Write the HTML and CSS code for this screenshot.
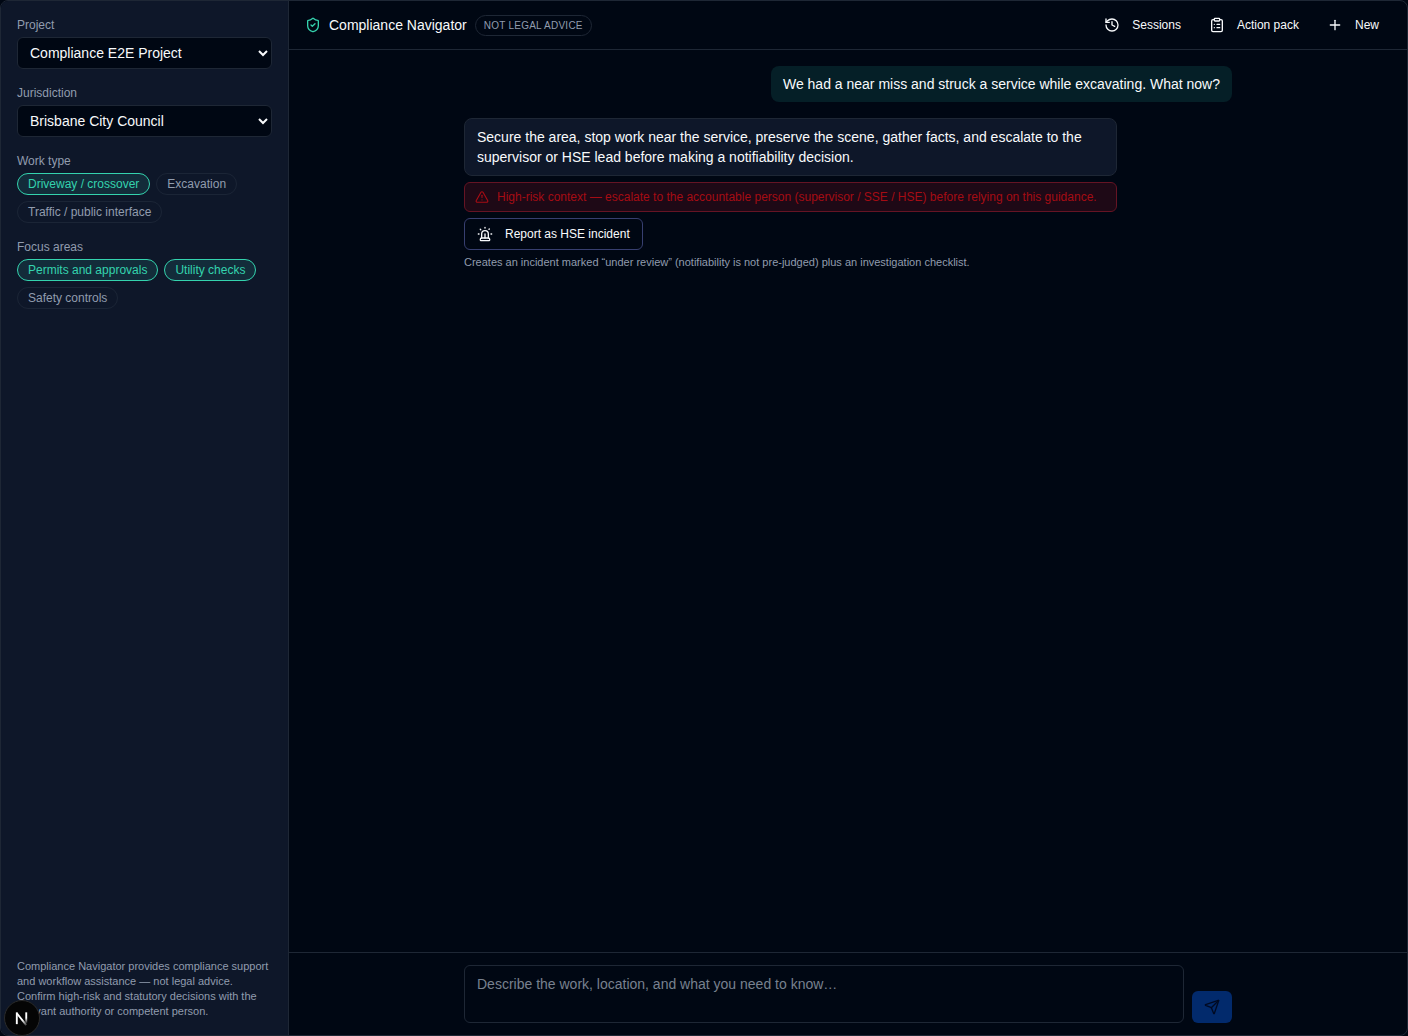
FILE: index.html
```html
<!DOCTYPE html>
<html lang="en">
<head>
    <meta charset="UTF-8">
    <meta name="viewport" content="width=device-width, initial-scale=1.0">
    <title>Compliance Navigator</title>
    <link rel="stylesheet" href="styles.css">
</head>
<body>
<div class="shell">
    <aside class="sidebar">
        <div class="field">
            <label class="label" for="project">Project</label>
            <select class="select" id="project">
                <option>Compliance E2E Project</option>
            </select>
        </div>
        <div class="field">
            <label class="label" for="jurisdiction">Jurisdiction</label>
            <select class="select" id="jurisdiction">
                <option>Brisbane City Council</option>
            </select>
        </div>
        <div class="field">
            <span class="label" id="work-type">Work type</span>
            <div class="chips" role="group" aria-labelledby="work-type">
                <button class="chip active" type="button" aria-pressed="true">Driveway / crossover</button>
                <button class="chip" type="button" aria-pressed="false">Excavation</button>
                <button class="chip" type="button" aria-pressed="false">Traffic / public interface</button>
            </div>
        </div>
        <div class="field">
            <span class="label" id="focus-areas">Focus areas</span>
            <div class="chips" role="group" aria-labelledby="focus-areas">
                <button class="chip active" type="button" aria-pressed="true">Permits and approvals</button>
                <button class="chip active" type="button" aria-pressed="true">Utility checks</button>
                <button class="chip" type="button" aria-pressed="false">Safety controls</button>
            </div>
        </div>
        <p class="disclaimer">Compliance Navigator provides compliance support and workflow assistance — not legal advice. Confirm high-risk and statutory decisions with the relevant authority or competent person.</p>
    </aside>

    <main class="main">
        <header class="header">
            <svg class="icon brand" viewBox="0 0 24 24"><path d="M20 13c0 5-3.5 7.5-7.66 8.95a1 1 0 0 1-.67-.01C7.5 20.5 4 18 4 13V6a1 1 0 0 1 1-1c2 0 4.5-1.2 6.24-2.72a1.17 1.17 0 0 1 1.52 0C14.51 3.81 17 5 19 5a1 1 0 0 1 1 1z"/><path d="m9 12 2 2 4-4"/></svg>
            <h1 class="title">Compliance Navigator</h1>
            <span class="badge">Not legal advice</span>
            <div class="actions">
                <button class="btn" type="button">
                    <svg class="icon" viewBox="0 0 24 24"><path d="M3 12a9 9 0 1 0 9-9 9.75 9.75 0 0 0-6.74 2.74L3 8"/><path d="M3 3v5h5"/><path d="M12 7v5l4 2"/></svg>
                    Sessions
                </button>
                <button class="btn" type="button">
                    <svg class="icon" viewBox="0 0 24 24"><rect width="8" height="4" x="8" y="2" rx="1" ry="1"/><path d="M16 4h2a2 2 0 0 1 2 2v14a2 2 0 0 1-2 2H6a2 2 0 0 1-2-2V6a2 2 0 0 1 2-2h2"/><path d="M12 11h4"/><path d="M12 16h4"/><path d="M8 11h.01"/><path d="M8 16h.01"/></svg>
                    Action pack
                </button>
                <button class="btn" type="button">
                    <svg class="icon" viewBox="0 0 24 24"><path d="M5 12h14"/><path d="M12 5v14"/></svg>
                    New
                </button>
            </div>
        </header>

        <section class="chat">
            <div class="thread">
                <p class="bubble user">We had a near miss and struck a service while excavating. What now?</p>
                <div class="reply">
                    <p class="bubble assistant">Secure the area, stop work near the service, preserve the scene, gather facts, and escalate to the supervisor or HSE lead before making a notifiability decision.</p>
                    <div class="warning" role="alert">
                        <svg class="icon small" viewBox="0 0 24 24"><path d="m21.73 18-8-14a2 2 0 0 0-3.48 0l-8 14A2 2 0 0 0 4 21h16a2 2 0 0 0 1.73-3"/><path d="M12 9v4"/><path d="M12 17h.01"/></svg>
                        <span>High-risk context — escalate to the accountable person (supervisor / SSE / HSE) before relying on this guidance.</span>
                    </div>
                    <button class="btn outline" type="button">
                        <svg class="icon" viewBox="0 0 24 24"><path d="M7 18v-6a5 5 0 1 1 10 0v6"/><path d="M5 21a1 1 0 0 0 1 1h12a1 1 0 0 0 1-1v-1a2 2 0 0 0-2-2H7a2 2 0 0 0-2 2z"/><path d="M21 12h1"/><path d="M18.5 4.5 18 5"/><path d="M2 12h1"/><path d="M12 2v1"/><path d="m4.929 4.929.707.707"/><path d="M12 12v6"/></svg>
                        Report as HSE incident
                    </button>
                    <p class="hint">Creates an incident marked “under review” (notifiability is not pre-judged) plus an investigation checklist.</p>
                </div>
            </div>
        </section>

        <footer class="footer">
            <form class="composer">
                <textarea class="input" rows="2" aria-label="Message" placeholder="Describe the work, location, and what you need to know…"></textarea>
                <button class="send" type="submit" aria-label="Send" disabled>
                    <svg class="icon" viewBox="0 0 24 24"><path d="M14.536 21.686a.5.5 0 0 0 .937-.024l6.5-19a.496.496 0 0 0-.635-.635l-19 6.5a.5.5 0 0 0-.024.937l7.93 3.18a2 2 0 0 1 1.112 1.11z"/><path d="m21.854 2.147-10.94 10.939"/></svg>
                </button>
            </form>
        </footer>
    </main>
</div>

<button class="dev-badge" type="button" aria-label="Open dev tools">
    <svg viewBox="0 0 36 36" fill="none">
        <defs>
            <linearGradient id="stem" x1="0" y1="12" x2="0" y2="24" gradientUnits="userSpaceOnUse">
                <stop offset="0.5" stop-color="#fff"/>
                <stop offset="1" stop-color="#fff" stop-opacity="0"/>
            </linearGradient>
            <linearGradient id="slash" x1="18" y1="18" x2="24" y2="26" gradientUnits="userSpaceOnUse">
                <stop offset="0.2" stop-color="#fff"/>
                <stop offset="1" stop-color="#fff" stop-opacity="0.1"/>
            </linearGradient>
        </defs>
        <path d="M12.500 13L22.500 25.500" stroke="url(#slash)" stroke-width="2"/>
        <path d="M12.500 24.500V12" stroke="#fff" stroke-width="2"/>
        <path d="M22.500 12v12" stroke="url(#stem)" stroke-width="2"/>
    </svg>
</button>
</body>
</html>
```

FILE: styles.css
```css
* {
    box-sizing: border-box;
    margin: 0;
    padding: 0;
}
html, body {
    height: 100%;
}
body {
    background: #000713;
    color: #f8fafc;
    font-family: "Liberation Sans", Arial, sans-serif;
    font-size: 14px;
    line-height: 20px;
}
button, select, textarea {
    font: inherit;
    color: inherit;
}
.shell {
    display: flex;
    height: 100%;
    border: 1px solid #1e2735;
    border-radius: 8px;
    overflow: hidden;
}

/* sidebar */
.sidebar {
    width: 288px;
    flex-shrink: 0;
    display: flex;
    flex-direction: column;
    gap: 16px;
    padding: 16px;
    background: #0e1729;
    border-right: 1px solid #1e2735;
}
.field {
    display: flex;
    flex-direction: column;
    gap: 4px;
}
.label {
    font-size: 12px;
    line-height: 16px;
    color: #919cae;
}
.select {
    width: 100%;
    height: 32px;
    padding: 0 0 0 8px;
    background: #000713;
    border: 1px solid #1e2735;
    border-radius: 6px;
}
.chips {
    display: flex;
    flex-wrap: wrap;
    gap: 6px;
}
.chip {
    padding: 2px 10px;
    font-size: 12px;
    line-height: 16px;
    color: #919cae;
    background: transparent;
    border: 1px solid #1b2536;
    border-radius: 11px;
}
.chip.active {
    color: #34d3ae;
    background: #132c3a;
    border-color: #34d3ae;
}
.disclaimer {
    margin-top: auto;
    font-size: 11px;
    line-height: 15px;
    color: #919cae;
}

/* main column */
.main {
    flex: 1;
    min-width: 0;
    display: flex;
    flex-direction: column;
}
.header {
    display: flex;
    align-items: center;
    gap: 8px;
    padding: 8px 16px;
    border-bottom: 1px solid #1e2735;
}
.icon {
    width: 16px;
    height: 16px;
    flex-shrink: 0;
    fill: none;
    stroke: currentColor;
    stroke-width: 2;
    stroke-linecap: round;
    stroke-linejoin: round;
}
.icon.small {
    width: 14px;
    height: 14px;
}
.brand {
    color: #34d3ae;
}
.title {
    font-size: 14px;
    font-weight: 400;
}
.badge {
    padding: 2px 8px;
    font-size: 10px;
    line-height: 15px;
    letter-spacing: 0.025em;
    text-transform: uppercase;
    color: #919cae;
    border: 1px solid #1e2735;
    border-radius: 11px;
}
.actions {
    display: flex;
    gap: 4px;
    margin-left: auto;
}
.btn {
    display: inline-flex;
    align-items: center;
    gap: 12px;
    height: 32px;
    padding: 0 12px;
    font-size: 12px;
    line-height: 16px;
    background: transparent;
    border: 0;
    border-radius: 6px;
}
.btn.outline {
    border: 1px solid #373f70;
}
.chat {
    flex: 1;
    min-height: 0;
    overflow: auto;
    padding: 16px;
}
.thread {
    display: flex;
    flex-direction: column;
    gap: 16px;
    max-width: 768px;
    margin: 0 auto;
}
.bubble {
    padding: 8px 12px;
    border-radius: 8px;
}
.bubble.user {
    align-self: flex-end;
    max-width: 85%;
    background: #051f27;
}
.reply {
    display: flex;
    flex-direction: column;
    align-items: flex-start;
    gap: 6px;
    width: 85%;
}
.bubble.assistant {
    background: #0e1729;
    border: 1px solid #1e2735;
}
.warning {
    display: flex;
    align-items: center;
    gap: 8px;
    width: 100%;
    padding: 6px 10px;
    font-size: 12px;
    line-height: 16px;
    color: #a50c14;
    background: #1e0916;
    border: 1px solid #651424;
    border-radius: 6px;
}
.hint {
    font-size: 11px;
    line-height: 13px;
    color: #919cae;
}

/* message composer */
.footer {
    padding: 12px 16px;
    border-top: 1px solid #1e2735;
}
.composer {
    display: flex;
    align-items: flex-end;
    gap: 8px;
    max-width: 768px;
    margin: 0 auto;
}
.input {
    flex: 1;
    min-width: 0;
    padding: 8px 12px;
    background: transparent;
    border: 1px solid #1e2735;
    border-radius: 6px;
    resize: none;
}
.input::placeholder {
    color: #78818f;
}
.send {
    display: flex;
    align-items: center;
    justify-content: center;
    width: 40px;
    height: 32px;
    color: #000a22;
    background: #022a6c;
    border: 0;
    border-radius: 6px;
}

/* floats over the sidebar corner */
.dev-badge {
    position: fixed;
    left: 4px;
    bottom: 0;
    width: 36px;
    height: 36px;
    background: #050505;
    border: 1px solid #2b2b2b;
    border-radius: 50%;
}
.dev-badge svg {
    display: block;
    width: 34px;
    height: 34px;
}
```
